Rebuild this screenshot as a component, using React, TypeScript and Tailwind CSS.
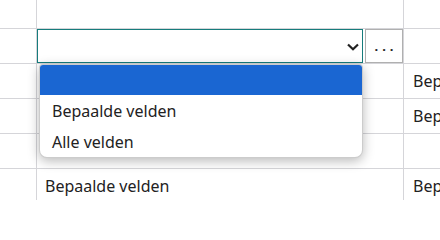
import React from 'react';

const font = { fontFamily: '"Noto Sans", "Segoe UI", Arial, sans-serif' };

const rows = [
  { main: null, side: '' },
  { main: 'select', side: '' },
  { main: '', side: 'Bep' },
  { main: '', side: 'Bep' },
  { main: '', side: '' },
  { main: 'Bepaalde velden', side: 'Bep' },
];

const Cell: React.FC<{ className?: string; children?: React.ReactNode }> = ({ className = '', children }) => (
  <div className={`border-r border-b border-[#d5d5d9] flex items-center ${className}`}>{children}</div>
);

const App: React.FC = () => {
  return (
    <div className="relative w-[440px] h-[200px] overflow-hidden bg-white text-[16px] text-[#222]" style={font}>
      <div className="grid grid-cols-[37px_367px_1fr]">
        {rows.map((row, i) => {
          const h = i === 0 ? 'h-[29px]' : 'h-[35px]';
          return (
            <React.Fragment key={i}>
              <Cell className={h} />
              <Cell className={h}>
                {row.main === 'select' ? (
                  <div className="flex gap-[2px] h-full w-full">
                    <div className="w-[327px] h-full border border-[#167c7c] bg-white flex items-center justify-end pr-[3px]">
                      <svg width="12" height="8" viewBox="0 0 12 8" className="mt-[1px]">
                        <path d="M1 1.5 L6 6.3 L11 1.5" fill="none" stroke="#222" strokeWidth="2.2" />
                      </svg>
                    </div>
                    <div className="w-[38px] h-full border border-[#b0b0b0] bg-white flex items-center justify-center">
                      <span className="text-[13px] font-bold tracking-[4px] pl-[4px] leading-none">...</span>
                    </div>
                  </div>
                ) : (
                  <span className="pl-2">{row.main}</span>
                )}
              </Cell>
              <Cell className={`${h} border-r-0`}>
                <span className="pl-[9px] whitespace-nowrap">{row.side}</span>
              </Cell>
            </React.Fragment>
          );
        })}
      </div>

      <div className="absolute left-[39px] top-[64px] w-[324px] h-[94px] bg-white rounded-t-[4px] rounded-b-[8px] border border-black/20 shadow-[0_3px_12px_rgba(0,0,0,0.28)] overflow-hidden flex flex-col">
        <div className="h-[30px] bg-[#1a66d2] shrink-0" />
        <div className="h-[32px] flex items-center pl-[12px]">Bepaalde velden</div>
        <div className="h-[31px] flex items-center pl-[12px]">Alle velden</div>
      </div>
    </div>
  );
};

export default App;
